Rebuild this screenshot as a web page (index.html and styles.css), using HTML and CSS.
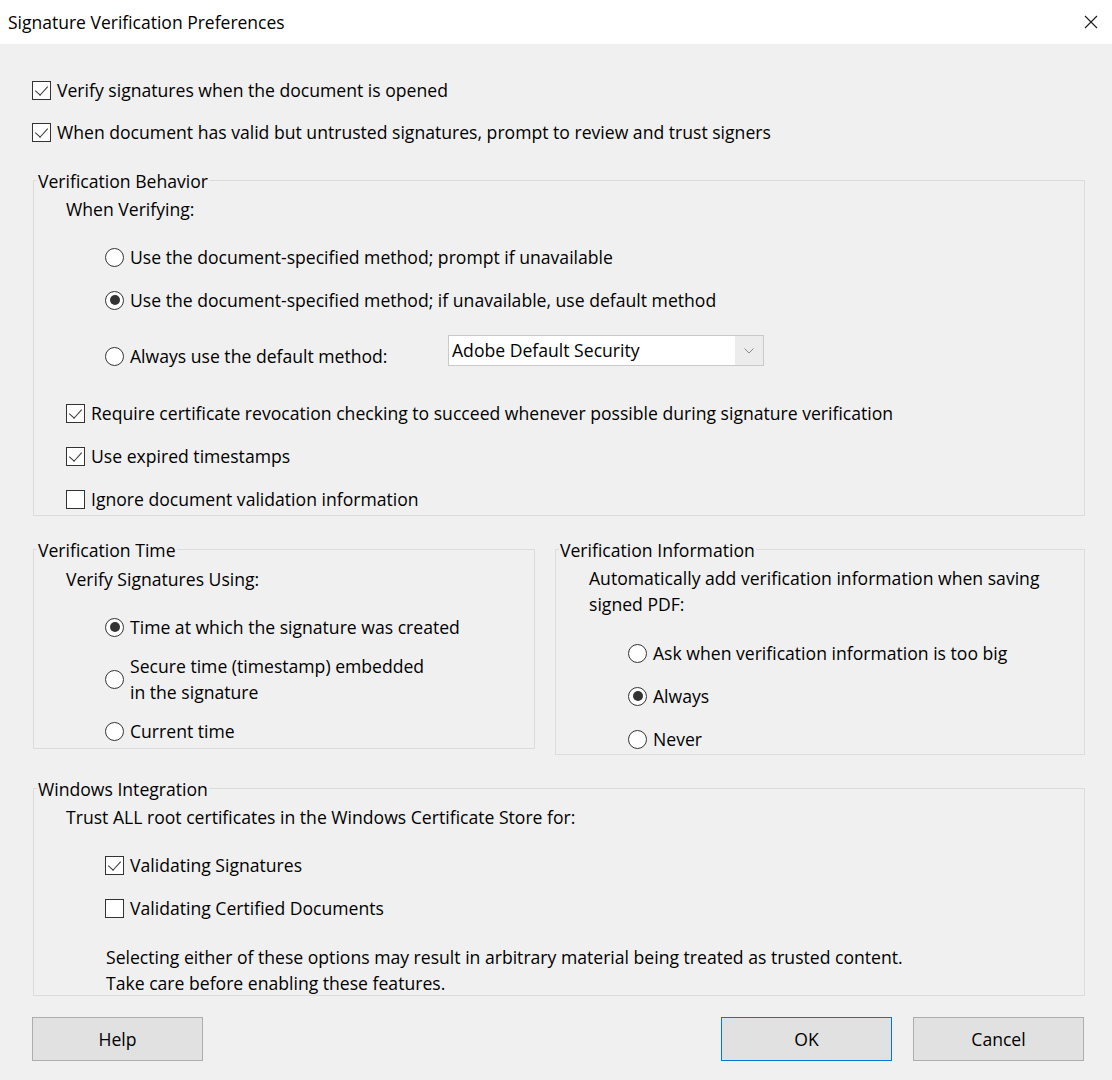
FILE: index.html
```html
<!DOCTYPE html>
<html>
<head>
<meta charset="utf-8">
<title>Signature Verification Preferences</title>
<link rel="stylesheet" href="styles.css">
</head>
<body>
<div class="dialog">
  <div class="titlebar">
    <span class="title">Signature Verification Preferences</span>
    <svg class="close" width="14" height="14" viewBox="0 0 14 14"><path d="M1 1 L13 13 M13 1 L1 13" stroke="#1a1a1a" stroke-width="1.1" fill="none"/></svg>
  </div>
  <div class="content">
    <div class="row top1"><span class="cb on"></span><span class="lbl">Verify signatures when the document is opened</span></div>
    <div class="row top2"><span class="cb on"></span><span class="lbl">When document has valid but untrusted signatures, prompt to review and trust signers</span></div>

    <div class="group g-behavior">
      <div class="gtitle">Verification Behavior</div>
      <div class="row sub sub-first">When Verifying:</div>
      <div class="indent">
        <div class="row r1"><span class="rb"></span><span class="lbl">Use the document-specified method; prompt if unavailable</span></div>
        <div class="row r2"><span class="rb on"></span><span class="lbl">Use the document-specified method; if unavailable, use default method</span></div>
        <div class="row r3"><span class="rb"></span><span class="lbl wide">Always use the default method:</span>
          <div class="select"><span class="select-text">Adobe Default Security</span><span class="select-arrow"><svg width="10" height="6" viewBox="0 0 10 6"><path d="M0.5 0.5 L5 5 L9.5 0.5" stroke="#8a8a8a" stroke-width="1" fill="none"/></svg></span></div>
        </div>
      </div>
      <div class="checks">
        <div class="row c1"><span class="cb on"></span><span class="lbl">Require certificate revocation checking to succeed whenever possible during signature verification</span></div>
        <div class="row c2"><span class="cb on"></span><span class="lbl">Use expired timestamps</span></div>
        <div class="row c2"><span class="cb"></span><span class="lbl">Ignore document validation information</span></div>
      </div>
    </div>

    <div class="pair">
      <div class="group g-time">
        <div class="gtitle">Verification Time</div>
        <div class="row sub sub-time">Verify Signatures Using:</div>
        <div class="indent">
          <div class="row t1"><span class="rb on"></span><span class="lbl">Time at which the signature was created</span></div>
          <div class="row t2"><span class="rb"></span><span class="lbl multi">Secure time (timestamp) embedded<br>in the signature</span></div>
          <div class="row t3"><span class="rb"></span><span class="lbl">Current time</span></div>
        </div>
      </div>
      <div class="group g-info">
        <div class="gtitle">Verification Information</div>
        <div class="info-text">Automatically add verification information when saving<br>signed PDF:</div>
        <div class="indent-info">
          <div class="row i1"><span class="rb"></span><span class="lbl">Ask when verification information is too big</span></div>
          <div class="row i2"><span class="rb on"></span><span class="lbl">Always</span></div>
          <div class="row i2"><span class="rb"></span><span class="lbl">Never</span></div>
        </div>
      </div>
    </div>

    <div class="group g-win">
      <div class="gtitle">Windows Integration</div>
      <div class="row sub sub-first">Trust ALL root certificates in the Windows Certificate Store for:</div>
      <div class="indent">
        <div class="row w1"><span class="cb on"></span><span class="lbl">Validating Signatures</span></div>
        <div class="row w2"><span class="cb"></span><span class="lbl">Validating Certified Documents</span></div>
        <p class="note">Selecting either of these options may result in arbitrary material being treated as trusted content.<br>Take care before enabling these features.</p>
      </div>
    </div>

    <div class="footer">
      <button class="btn">Help</button>
      <div class="right-btns">
        <button class="btn default">OK</button>
        <button class="btn">Cancel</button>
      </div>
    </div>
  </div>
</div>
</body>
</html>
```

FILE: styles.css
```css
* { box-sizing: border-box; }
html, body { margin: 0; padding: 0; }
body {
  background: #f0f0f0;
  font-family: "Open Sans", "Noto Sans", sans-serif;
  font-size: 17.6px;
  color: #000;
}
.dialog { width: 1112px; height: 1080px; background: #f0f0f0; overflow: hidden; }
.titlebar {
  height: 44px;
  background: #fff;
  display: flex;
  align-items: center;
  justify-content: space-between;
  padding: 0 14px 0 8px;
}
.title { font-size: 17.5px; color: #000; }
.close { display: block; }

.content { padding: 0 27px 0 32px; }

.row { display: flex; align-items: center; height: 24px; line-height: 24px; white-space: nowrap; }
.top1 { margin-top: 34px; }
.top2 { margin-top: 18px; }

.cb {
  width: 19px; height: 19px; flex: none;
  border: 1px solid #333;
  background: #fff;
  margin-right: 6px;
  position: relative;
}
.cb.on::after {
  content: "";
  position: absolute;
  left: 5px; top: 1px;
  width: 6px; height: 11px;
  border-right: 1px solid #333;
  border-bottom: 1px solid #333;
  transform: rotate(42deg);
  transform-origin: center;
}
.rb {
  width: 19px; height: 19px; flex: none;
  border: 1px solid #333;
  border-radius: 50%;
  background: #fff;
  margin-right: 6px;
  display: flex; align-items: center; justify-content: center;
}
.rb.on::after {
  content: "";
  width: 10px; height: 10px;
  border-radius: 50%;
  background: #333;
}

.group {
  border: 1px solid #dcdcdc;
  margin-left: 1px;
}
.gtitle {
  display: table;
  height: 24px;
  line-height: 24px;
  margin-top: -12px;
  margin-left: 3px;
  padding: 0 1px;
  background: #f0f0f0;
  white-space: nowrap;
}
.sub { padding-left: 32px; }
.sub-first { margin-top: 4px; }
.sub-time { margin-top: 5px; }

.g-behavior { margin-top: 36px; padding-bottom: 4px; }
.indent { padding-left: 71px; }
.r1 { margin-top: 24px; }
.r2 { margin-top: 19px; }
.r3 { margin-top: 32px; align-items: center; }
.wide { width: 318px; }
.select {
  align-self: flex-start;
  margin-top: -9px;
  width: 316px; height: 31px;
  border: 1px solid #c9c9c9;
  background: #fff;
  display: flex;
}
.select-text { flex: 1; padding-left: 3px; line-height: 29px; }
.select-arrow {
  width: 28px;
  background: #ececec;
  display: flex; align-items: center; justify-content: center;
}
.select-arrow svg { display: block; }
.checks { padding-left: 32px; }
.c1 { margin-top: 33px; }
.c2 { margin-top: 19px; }

.pair { display: flex; align-items: flex-start; gap: 20px; margin-top: 33px; }
.g-time { width: 502px; flex: none; padding-bottom: 5px; }
.g-info { flex: 1; margin-left: 0; padding-bottom: 3px; }
.t1 { margin-top: 24px; }
.t2 { margin-top: 14px; height: 52px; }
.multi { line-height: 26px; }
.t3 { margin-top: 14px; }
.info-text { padding-left: 33px; margin-top: 3px; line-height: 26px; white-space: nowrap; }
.indent-info { padding-left: 72px; }
.i1 { margin-top: 24px; }
.i2 { margin-top: 19px; }

.g-win { margin-top: 33px; }
.w1 { margin-top: 24px; }
.w2 { margin-top: 19px; }
.note { margin: 24px 0 -1px 1px; line-height: 26px; white-space: nowrap; }

.footer { display: flex; justify-content: space-between; margin-top: 21px; margin-right: 1px; }
.right-btns { display: flex; gap: 21px; }
.btn {
  width: 171px; height: 44px;
  background: #e1e1e1;
  border: 1px solid #adadad;
  font: inherit;
  color: #000;
  padding: 0;
}
.btn.default { border-color: #0078d7; width: 171px; }
```
